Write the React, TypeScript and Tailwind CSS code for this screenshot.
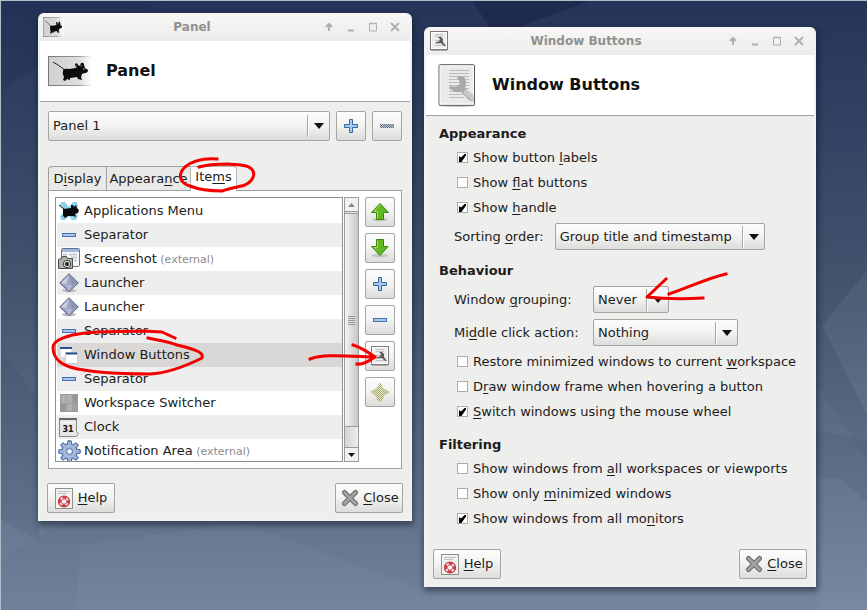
import type { ReactNode } from "react"

const raised =
  "border border-[#a3a5a1] rounded-[2px] bg-linear-to-b from-[#fdfdfd] via-[#f2f2f1] to-[#dcdddb]"

/* ---------- icons ---------- */

function MouseShape() {
  return (
    <g>
      <path d="M5 6 L10 9 L17 14" fill="none" stroke="#222" strokeWidth="1" />
      <path d="M15 14 Q17 12 21 13 L28 12 L27 8 Q29 6 30 9 L32 10 L33 7 Q36 6 36 9 L37 12 L40 14 Q40 17 37 17 L34 18 L33 21 L34 24 L30 23 L29 21 L22 22 L22 24 L19 23 L17 25 L15 24 L16 21 Q14 18 15 14 Z" fill="#0b0b0b" />
      <path d="M28 9 l1 3 M34 9 l-1 2" stroke="#777" strokeWidth="0.8" />
      <circle cx="36" cy="13" r="0.8" fill="#bbb" />
    </g>
  )
}

function MousePanelIcon({ id, className }: { id: string; className: string }) {
  return (
    <svg viewBox="0 0 44 30" preserveAspectRatio="none" className={className} aria-hidden="true">
      <defs>
        <linearGradient id={id}>
          <stop offset="0" stopColor="#cfd1ce" />
          <stop offset="0.7" stopColor="#dededc" />
          <stop offset="1" stopColor="#fff" />
        </linearGradient>
        <linearGradient id={`${id}-edge`}>
          <stop offset="0" stopColor="#777" />
          <stop offset="0.7" stopColor="#999" />
          <stop offset="1" stopColor="#fff" />
        </linearGradient>
      </defs>
      <rect width="44" height="30" fill={`url(#${id}-edge)`} />
      <rect x="1" y="1" width="43" height="28" fill={`url(#${id})`} />
      <MouseShape />
    </svg>
  )
}

function ConfigIcon({ className }: { className: string }) {
  return (
    <svg viewBox="0 0 38 43" className={className} aria-hidden="true">
      <ellipse cx="19" cy="41.500" rx="18.500" ry="1.500" fill="#bbb" />
      <rect x="1" y="0.700" width="35.500" height="40.600" rx="1" fill="#eaeae8" stroke="#5c5c5c" />
      <rect x="2.200" y="2" width="33" height="38" fill="none" stroke="#fafafa" />
      <path d="M11 6.500h20M11 9.500h20M11 12.500h20M11 15.500h20M11 18.500h20M11 21.500h20M11 24.500h20M11 27.500h20M11 30.500h20M11 33.500h15" stroke="#bcbdbb" />
      <path d="M20 12 Q28 11 28 18 Q28 21 27 24 L35.500 33 L35.500 38 L31 36 L23 28 Q16 29 11 24 L12 22 Q18 24 21 21 Q23 18 19 14 Z" fill="#a9aaa8" />
      <path d="M25 29 L35.500 38 V31 L28 25 Z" fill="#c9c9c7" />
    </svg>
  )
}

function ConfigIconSmall({ className }: { className: string }) {
  return (
    <svg viewBox="0 0 18 20" className={className} aria-hidden="true">
      <rect x="0.500" y="0.500" width="17" height="18" fill="#ececea" stroke="#7a7a7a" />
      <rect x="1.500" y="1.500" width="15" height="16" fill="none" stroke="#fff" />
      <path d="M5 3.500h8M5 5.500h8M5 9.500h8M5 12.500h6M5 14.500h8" stroke="#c2c2c2" />
      <path d="M8 6h3l2 2v3l3 4h-2l-3-3H6v-1l3-0.500 1-2.500z" fill="#5d5d5d" />
      <path d="M1 19.500h16" stroke="#aaa" />
    </svg>
  )
}

function PlusIcon() {
  return (
    <svg viewBox="0 0 16 16" className="size-4" aria-hidden="true">
      <path d="M6.500 1.500h3v5h5v3h-5v5h-3v-5h-5v-3h5z" fill="#a9c8ef" stroke="#3465a4" />
    </svg>
  )
}

function MinusIcon({ faded = false }: { faded?: boolean }) {
  return (
    <svg viewBox="0 0 16 16" className="size-4" aria-hidden="true">
      {faded ? (
        <>
          <rect x="1" y="6" width="14" height="4" fill="#c5ced8" />
          <path d="M1 6.500h14M1 8.500h14" stroke="#5c6a7c" strokeDasharray="1 1" />
          <path d="M2 7.500h13M2 9.500h13" stroke="#5c6a7c" strokeDasharray="1 1" />
        </>
      ) : (
        <rect x="1.500" y="6.500" width="13" height="3" fill="#a9c8ef" stroke="#4470b0" />
      )}
    </svg>
  )
}

function ArrowIcon({ down = false }: { down?: boolean }) {
  return (
    <svg viewBox="0 0 20 20" className="size-5" aria-hidden="true">
      <ellipse cx="10" cy="17.500" rx="8" ry="1.800" fill="#c6c6c4" />
      {down ? (
        <path d="M6.500 1.500h7v7h4.500L10 17.500 1.500 8.500h5z" fill="#62b822" stroke="#41800f" />
      ) : (
        <path d="M10 1.500l8.500 9h-5v7h-7v-7h-5z" fill="#62b822" stroke="#41800f" />
      )}
      {down ? (
        <path d="M7.500 2.500v7H4l3 3" fill="none" stroke="#9ce45c" />
      ) : (
        <path d="M10 3L4 9.500h3.500v7" fill="none" stroke="#9ce45c" />
      )}
    </svg>
  )
}

function StarIcon() {
  return (
    <svg viewBox="0 0 20 20" className="size-5" aria-hidden="true">
      <defs>
        <pattern id="stipple" width="2" height="2" patternUnits="userSpaceOnUse">
          <rect width="2" height="2" fill="#eceec6" />
          <path d="M0 0h1v1H0zM1 1h1v1H1z" fill="#a0a370" />
        </pattern>
      </defs>
      <path d="M10 0l3 6 7 4-6 4-1 4-3 2-3-2-1-4-6-4 7-4z" fill="url(#stipple)" />
    </svg>
  )
}

function HelpIcon() {
  return (
    <svg viewBox="0 0 18 21" className="h-[21px] w-[18px]" aria-hidden="true">
      <rect x="0.500" y="0.500" width="17" height="20" fill="#f1f1ef" stroke="#8f918c" />
      <path d="M3 3.500h12M3 5.500h9" stroke="#c0c2be" />
      <circle cx="9" cy="13.500" r="4.200" fill="none" stroke="#f4dedd" strokeWidth="3" />
      <circle cx="9" cy="13.500" r="5.500" fill="none" stroke="#c23a48" strokeWidth="1.200" />
      <circle cx="9" cy="13.500" r="4.200" fill="none" stroke="#d03645" strokeWidth="2.600" strokeDasharray="4 2.600" strokeDashoffset="2" />
      <circle cx="9" cy="13.500" r="2.600" fill="#fff" stroke="#b9414c" strokeWidth="0.800" />
    </svg>
  )
}

function CloseIcon() {
  return (
    <svg viewBox="0 0 18 18" className="size-[18px]" aria-hidden="true">
      <path d="M3.500 3.500l11 11M14.500 3.500l-11 11" stroke="#6a6c68" strokeWidth="5" strokeLinecap="round" />
      <path d="M3.500 3.500l11 11M14.500 3.500l-11 11" stroke="#a2a3a0" strokeWidth="3" strokeLinecap="round" />
    </svg>
  )
}

function AppMenuIcon() {
  return (
    <svg viewBox="0 0 22 20" className="h-5 w-[22px]" aria-hidden="true">
      <path d="M3 1l4 0 4 5 4-5 4 0 1 4-4 5 4 5-2 4-4 0-3-4-4 4-4 0-1-4 5-5-5-5z" fill="#8fd0ea" />
      <path d="M1 4l5 4" stroke="#222" />
      <path d="M5 8l8-1 0-3 2 0 1 2 2-2 1 3 2 2-1 3-3 1 1 3-3-1-5 0-3 2-2-2z" fill="#0b0b0b" />
    </svg>
  )
}

function ScreenshotIcon() {
  return (
    <svg viewBox="0 0 22 22" className="size-[22px]" aria-hidden="true">
      <rect x="3.500" y="0.500" width="18" height="18" rx="1" fill="#f7f8fa" stroke="#5c7294" />
      <rect x="4" y="1" width="17" height="3" fill="#9fb6d6" />
      <path d="M5 6.500h4M11 6.500h8M13 9.500h6M16 12.500h3" stroke="#c3ccd8" strokeWidth="2" />
      <path d="M0.500 11.500l3-1 1-2h4l1 2h5v10h-14z" fill="#aeb0ac" stroke="#4a4c49" />
      <circle cx="9" cy="16" r="3.700" fill="#ddd" stroke="#444" />
      <circle cx="9" cy="16" r="2" fill="#222" />
    </svg>
  )
}

function LauncherIcon() {
  return (
    <svg viewBox="0 0 20 20" className="size-5" aria-hidden="true">
      <ellipse cx="10" cy="17.500" rx="7" ry="1.800" fill="#bbb" />
      <path d="M10 0.700l9.300 9.300-9.300 8.600L0.700 10z" fill="#a0a7c6" stroke="#555c78" />
      <path d="M10 2l-8 8 5 1z" fill="#c9cee2" />
      <path d="M10 2l8 8-5 3z" fill="#8b92b4" />
      <path d="M7 11l3 7 3-5" fill="#b1b8d4" />
    </svg>
  )
}

function WindowsIcon() {
  return (
    <svg viewBox="0 0 18 18" className="size-[18px]" aria-hidden="true">
      <rect x="0.500" y="1.500" width="11" height="10" fill="#fff" stroke="#ddd" />
      <path d="M0 2h12" stroke="#2b4f8e" strokeWidth="2" />
      <rect x="5.500" y="6.500" width="12" height="11" fill="#fff" stroke="#ccc" />
      <path d="M6 7.500h11" stroke="#2b4f8e" strokeWidth="2" />
    </svg>
  )
}

function WorkspaceIcon() {
  return (
    <svg viewBox="0 0 18 18" className="size-[18px]" aria-hidden="true">
      <rect x="0.500" y="0.500" width="17" height="17" fill="#a2a2a2" stroke="#9a9a9a" />
      <path d="M1 1h5v8H1zM7 1h5v8H7zM7 10h5v7H7z" fill="#b0b0b0" />
      <path d="M13 1h4v8h-4zM1 10h5v7H1z" fill="#969696" />
    </svg>
  )
}

function ClockIcon() {
  return (
    <svg viewBox="0 0 20 19" className="h-[19px] w-5" aria-hidden="true">
      <path d="M0.500 1.500h17v12l2 2-2 3h-17z" fill="#e6e6e4" stroke="#8a8a8a" />
      <path d="M0 1h18" stroke="#666" strokeWidth="2" />
      <path d="M2 4.500h14" stroke="#fff" />
      <text x="9" y="14" textAnchor="middle" fontSize="8" fontWeight="700" fill="#111">
        31
      </text>
    </svg>
  )
}

const teeth = [0, 45, 90, 135, 180, 225, 270, 315]

function GearIcon() {
  return (
    <svg viewBox="0 0 24 24" className="size-[23px]" aria-hidden="true">
      <g fill="#8ea8d6" stroke="#48669c">
        {teeth.map((angle) => (
          <path key={angle} d="M9.500 5L10.300 0.800h3.400L14.500 5z" transform={`rotate(${angle} 12 12)`} />
        ))}
      </g>
      <circle cx="12" cy="12" r="8" fill="#9db4dc" stroke="#48669c" />
      <g fill="#9db4dc">
        {teeth.map((angle) => (
          <path key={angle} d="M10.200 6l0.500-4h2.600l0.500 4z" transform={`rotate(${angle} 12 12)`} />
        ))}
      </g>
      <circle cx="12" cy="12" r="5" fill="#86a1d0" stroke="#b9cae8" />
      <circle cx="12" cy="12" r="2.900" fill="#fff" stroke="#5f7bb0" />
    </svg>
  )
}

/* ---------- controls ---------- */

function TitleButton({ label, children }: { label: string; children: ReactNode }) {
  return (
    <button type="button" aria-label={label} className="grid h-6 w-[22px] place-items-center">
      <svg viewBox="0 0 10 10" className="size-2.5" fill="none" stroke="#b0b0ae" strokeWidth="1.500">
        {children}
      </svg>
    </button>
  )
}

type DialogProps = {
  title: string
  place: string
  titleIcon: ReactNode
  headerIcon: ReactNode
  children: ReactNode
}

function DialogWindow({ title, place, titleIcon, headerIcon, children }: DialogProps) {
  return (
    <section
      aria-label={title}
      className={`absolute rounded-t-md border-2 border-t-0 border-[#f0f2f2] bg-[#eeeeec] shadow-[1px_3px_6px_1px_rgba(10,15,30,0.5)] ${place}`}
    >
      <div className="flex h-7 items-center rounded-t-md bg-linear-to-b from-[#f7f7f6] to-[#ececea] pr-1 pl-[3px]">
        {titleIcon}
        <span className="flex-1 pl-0.5 text-center text-xs font-bold text-[#90918f]">{title}</span>
        <TitleButton label="Roll up">
          <path d="M5 9V2M2 5L5 2 8 5" strokeWidth="2" />
        </TitleButton>
        <TitleButton label="Minimize">
          <path d="M2 8.500h6" strokeWidth="2" />
        </TitleButton>
        <TitleButton label="Maximize">
          <path d="M1.500 1.500h7v7.500h-7z" strokeWidth="1" />
          <path d="M1 1.500h8" />
        </TitleButton>
        <TitleButton label="Close window">
          <path d="M1 1l8 8M9 1l-8 8" strokeWidth="2" />
        </TitleButton>
      </div>
      <header className="flex h-[61px] items-center border-b border-[#a0a19f] bg-white">
        <span className="ml-2 w-[58px]">{headerIcon}</span>
        <h1 className="text-base font-bold text-[#111]">{title}</h1>
      </header>
      {children}
    </section>
  )
}

type SelectProps = { id: string; label?: string; className: string; options: string[] }

function Select({ id, label, className, options }: SelectProps) {
  return (
    <span className={`grid items-center ${className}`}>
      <select id={id} aria-label={label} className={`col-start-1 row-start-1 size-full appearance-none pr-6 pl-1 ${raised}`}>
        {options.map((option) => (
          <option key={option}>{option}</option>
        ))}
      </select>
      <span className="pointer-events-none col-start-1 row-start-1 mr-1.5 flex h-[22px] items-center gap-[5px] justify-self-end">
        <span className="h-full w-0.5 border-r border-l border-r-white border-l-[#a8a9a7]" />
        <svg viewBox="0 0 10 6" className="h-1.5 w-2.5">
          <path d="M0 0h10L5 6z" fill="#111" />
        </svg>
      </span>
    </span>
  )
}

function IconButton({ label, disabled, children }: { label: string; disabled?: boolean; children: ReactNode }) {
  return (
    <button type="button" aria-label={label} disabled={disabled} className={`grid size-[30px] shrink-0 place-items-center ${raised}`}>
      {children}
    </button>
  )
}

function Check({ checked = false, children }: { checked?: boolean; children: ReactNode }) {
  return (
    <label className="ml-[18px] flex h-[25px] items-center gap-[5px]">
      <span className="grid size-[11px] place-items-center">
        <input
          type="checkbox"
          defaultChecked={checked}
          className="peer col-start-1 row-start-1 size-[11px] appearance-none border border-[#acada9] bg-white"
        />
        <svg viewBox="0 0 7 8" className="pointer-events-none col-start-1 row-start-1 hidden h-2 w-[7px] peer-checked:block">
          <path d="M0 2l2 1.500L5.500 0H7v1.500L2.500 8H0z" fill="#000" />
        </svg>
      </span>
      <span>{children}</span>
    </label>
  )
}

function Key({ children }: { children: string }) {
  return <span className="underline decoration-1 underline-offset-2">{children}</span>
}

function Footer() {
  return (
    <footer className="flex justify-between px-[7px] pb-1.5">
      <button type="button" className={`flex h-[30px] w-[68px] items-center justify-center gap-[5px] ${raised}`}>
        <HelpIcon />
        <span><Key>H</Key>elp</span>
      </button>
      <button type="button" className={`flex h-[30px] w-[68px] items-center justify-center gap-1 pl-0.5 ${raised}`}>
        <CloseIcon />
        <span><Key>C</Key>lose</span>
      </button>
    </footer>
  )
}

/* ---------- panel dialog ---------- */

const panelItems = [
  { name: "Applications Menu", icon: <AppMenuIcon /> },
  { name: "Separator", icon: <MinusIcon /> },
  { name: "Screenshot", external: true, icon: <ScreenshotIcon /> },
  { name: "Launcher", icon: <LauncherIcon /> },
  { name: "Launcher", icon: <LauncherIcon /> },
  { name: "Separator", icon: <MinusIcon /> },
  { name: "Window Buttons", selected: true, icon: <WindowsIcon /> },
  { name: "Separator", icon: <MinusIcon /> },
  { name: "Workspace Switcher", icon: <WorkspaceIcon /> },
  { name: "Clock", icon: <ClockIcon /> },
  { name: "Notification Area", external: true, icon: <GearIcon /> },
]

function Scrollbar() {
  return (
    <div className="mr-1.5 ml-px flex w-[15px] flex-col border border-[#9a9c98] bg-[#e2e2e0]" aria-hidden="true">
      <div className="grid h-3.5 place-items-center border-b border-[#9a9c98] bg-[#f1f1f0]">
        <svg viewBox="0 0 7 4" className="h-1 w-[7px]"><path d="M0 4h7L3.500 0z" fill="#888" /></svg>
      </div>
      <div className="mt-px grid flex-1 place-items-center border-y border-[#9a9c98] bg-linear-to-r from-[#f4f4f3] to-[#c6c7c5]">
        <svg viewBox="0 0 7 9" className="h-[9px] w-[7px]">
          <path d="M0 0.500h7M0 2.500h7M0 4.500h7M0 6.500h7M0 8.500h7" stroke="#999" />
        </svg>
      </div>
      <div className="h-5 bg-linear-to-r from-[#d5d5d3] to-[#ececea]" />
      <div className="grid h-3.5 place-items-center border-t border-[#9a9c98] bg-[#f1f1f0]">
        <svg viewBox="0 0 7 4" className="h-1 w-[7px]"><path d="M0 0h7L3.500 4z" fill="#111" /></svg>
      </div>
    </div>
  )
}

function PanelDialog() {
  return (
    <DialogWindow
      title="Panel"
      place="top-[13px] left-[38px] w-[374px]"
      titleIcon={<MousePanelIcon id="mouse-small" className="h-5 w-[21px]" />}
      headerIcon={<MousePanelIcon id="mouse-large" className="h-[30px] w-11" />}
    >
      <div className="flex gap-1.5 px-2 pt-[9px]">
        <Select id="panel" label="Panel" className="h-[30px] flex-1" options={["Panel 1", "Panel 2"]} />
        <IconButton label="Add panel"><PlusIcon /></IconButton>
        <IconButton label="Remove panel" disabled><MinusIcon faded /></IconButton>
      </div>

      <div className="mx-2 mt-[25px] mb-3.5">
        <div role="tablist" className="flex h-6">
          <button type="button" role="tab" aria-selected="false" className="w-[58px] rounded-tl-sm border-t border-l border-[#a0a19f] bg-[#e9e9e7]">
            D<Key>i</Key>splay
          </button>
          <button type="button" role="tab" aria-selected="false" className="w-[84px] border-t border-l border-[#a0a19f] bg-[#e9e9e7]">
            Appeara<Key>n</Key>ce
          </button>
          <button type="button" role="tab" aria-selected="true" className="-mb-px w-[47px] rounded-tr-sm border border-b-0 border-[#b4b5b3] bg-white pb-1">
            Ite<Key>m</Key>s
          </button>
        </div>
        <div role="tabpanel" className="flex border border-[#a0a19f] bg-white p-1.5">
          <ul className="h-[265px] flex-1 overflow-hidden border border-[#8f908e] pt-px pl-px">
            {panelItems.map((item, i) => (
              <li
                key={i}
                className={`flex h-6 items-center gap-[3px] whitespace-nowrap ${
                  item.selected ? "bg-[#d9d8d6]" : i % 2 ? "bg-[#eeeeee]" : "bg-white"
                }`}
              >
                <span className="grid w-6 shrink-0 place-items-center">{item.icon}</span>
                <span>
                  {item.name}
                  {item.external && <span className="text-[11px] text-[#8c8c8c]"> (external)</span>}
                </span>
              </li>
            ))}
          </ul>
          <Scrollbar />
          <div className="flex flex-col gap-1.5">
            <IconButton label="Move up"><ArrowIcon /></IconButton>
            <IconButton label="Move down"><ArrowIcon down /></IconButton>
            <IconButton label="Add item"><PlusIcon /></IconButton>
            <IconButton label="Remove item"><MinusIcon /></IconButton>
            <IconButton label="Edit item"><ConfigIconSmall className="h-5 w-[18px]" /></IconButton>
            <IconButton label="About item" disabled><StarIcon /></IconButton>
          </div>
        </div>
      </div>
      <Footer />
    </DialogWindow>
  )
}

/* ---------- window buttons dialog ---------- */

function Group({ title, children }: { title: string; children: ReactNode }) {
  return (
    <section>
      <h2 className="pb-px leading-5 font-bold">{title}</h2>
      {children}
    </section>
  )
}

function WindowButtonsDialog() {
  return (
    <DialogWindow
      title="Window Buttons"
      place="top-[27px] left-[424px] w-[392px]"
      titleIcon={<ConfigIconSmall className="ml-px h-5 w-[18px]" />}
      headerIcon={<ConfigIcon className="ml-1 h-[43px] w-[38px]" />}
    >
      <form className="mb-[18px] flex flex-col gap-[11px] pt-2 pl-[13px]">
        <Group title="Appearance">
          <Check checked>Show button <Key>l</Key>abels</Check>
          <Check>Show <Key>fl</Key>at buttons</Check>
          <Check checked>Show <Key>h</Key>andle</Check>
          <div className="mt-[3px] ml-[15px] flex items-center gap-[11px]">
            <label htmlFor="sorting">Sorting <Key>o</Key>rder:</label>
            <Select id="sorting" className="h-[27px] w-[210px]" options={["Group title and timestamp", "Timestamp", "Window title"]} />
          </div>
        </Group>
        <Group title="Behaviour">
          <div className="ml-[15px] grid grid-cols-[139px_auto] items-center justify-start gap-y-1.5 pt-1 pb-[3px]">
            <label htmlFor="grouping">Window <Key>g</Key>rouping:</label>
            <Select id="grouping" className="h-[27px] w-[76px]" options={["Never", "Always"]} />
            <label htmlFor="middle">Mi<Key>d</Key>dle click action:</label>
            <Select id="middle" className="h-[27px] w-[145px]" options={["Nothing", "Close Window"]} />
          </div>
          <Check>Restore minimized windows to current <Key>w</Key>orkspace</Check>
          <Check>D<Key>r</Key>aw window frame when hovering a button</Check>
          <Check checked><Key>S</Key>witch windows using the mouse wheel</Check>
        </Group>
        <Group title="Filtering">
          <Check>Show windows from <Key>a</Key>ll workspaces or viewports</Check>
          <Check>Show only <Key>m</Key>inimized windows</Check>
          <Check checked>Show windows from all mo<Key>n</Key>itors</Check>
        </Group>
      </form>
      <Footer />
    </DialogWindow>
  )
}

/* ---------- desktop ---------- */

function Wallpaper() {
  return (
    <svg viewBox="0 0 867 610" preserveAspectRatio="none" className="absolute inset-0 size-full" aria-hidden="true">
      <path d="M0 0H170L120 14 0 90z" fill="#1d2a4c" opacity="0.25" />
      <path d="M472 0H590L515 27H490z" fill="#1b2648" opacity="0.7" />
      <path d="M867 270L822 325 867 415z" fill="#fff" opacity="0.06" />
      <path d="M817 385L867 460V610H817z" fill="#fff" opacity="0.03" />
      <path d="M0 350L38 400V540L0 520z" fill="#1d2c4c" opacity="0.08" />
      <path d="M0 560L60 522H250L80 545 75 610H0z" fill="#2c3c5c" opacity="0.06" />
      <path d="M240 522L424 590V522z" fill="#2c3c5c" opacity="0.06" />
      <path d="M817 478H840L867 502V440L817 430z" fill="#2c3c5c" opacity="0.1" />
    </svg>
  )
}

function PenMarks() {
  return (
    <svg
      viewBox="0 0 867 610"
      className="pointer-events-none absolute top-0 left-0 h-[610px] w-[867px]"
      fill="none"
      stroke="#f20000"
      strokeWidth="3"
      strokeLinecap="square"
      strokeLinejoin="round"
      aria-hidden="true"
    >
      <path d="M217 159C202 158 191 162 185 167C177 175 180 183 190 186C200 190 212 191 222 191C230 188 239 187 245 185C253 181 255 175 253 171C249 164 238 165 228 164C216 164 206 165 199 167" />
      <path d="M175 338L162 332L143 331C120 332 100 331 85 333C68 335 53 340 53 347C53 357 58 363 70 367C90 373 120 374 150 374C168 373 186 366 202 358C204 353 198 350 177 345C166 341 156 340 148 338" />
      <path d="M310 359C322 354 345 356 375 357M353 345C360 347 365 350 375 357C369 361 363 365 357 364" />
      <path d="M726 274C705 279 690 287 669 294M666 279L647 297C665 299 685 299 703 298" />
    </svg>
  )
}

export default function App() {
  return (
    <main className="relative min-h-screen overflow-hidden border-t border-l border-[#aebfca] bg-linear-to-b from-[#26345a] via-[#46566f] to-[#74869f] font-['DejaVu_Sans',sans-serif] text-[13px] text-[#1c1c1c]">
      <Wallpaper />
      <div className="absolute -top-px -left-px h-full w-full">
        <PanelDialog />
        <WindowButtonsDialog />
        <PenMarks />
      </div>
    </main>
  )
}
